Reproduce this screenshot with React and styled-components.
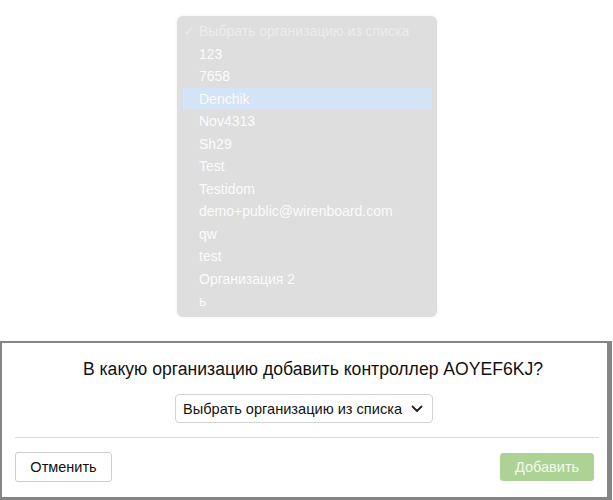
import React from "react";
import styled, { createGlobalStyle } from "styled-components";

const GlobalStyle = createGlobalStyle`
  html, body {
    margin: 0;
    padding: 0;
    background: #ffffff;
  }
  body {
    font-family: "Liberation Sans", Arial, sans-serif;
    width: 613px;
    height: 500px;
    overflow: hidden;
  }
`;

const organizations = [
  "123",
  "7658",
  "Denchik",
  "Nov4313",
  "Sh29",
  "Test",
  "Testidom",
  "demo+public@wirenboard.com",
  "qw",
  "test",
  "Организация 2",
  "ь",
];

const Page = styled.div`
  display: flex;
  flex-direction: column;
  height: 500px;
`;

const MenuArea = styled.div`
  height: 341px;
  display: flex;
  justify-content: center;
  align-items: flex-start;
  padding-top: 16px;
  box-sizing: border-box;
`;

const Menu = styled.ul`
  list-style: none;
  margin: 0 0 0 1px;
  padding: 4px 5px;
  width: 260px;
  box-sizing: border-box;
  background: #dedede;
  border-radius: 6px;
  box-shadow: 0 0 4px rgba(0, 0, 0, 0.06);
`;

const Option = styled.li`
  position: relative;
  height: 22.5px;
  line-height: 22.5px;
  padding-left: 17px;
  border-radius: 3px;
  font-family: "Liberation Sans", Arial, sans-serif;
  font-size: 14px;
  color: ${(p) => (p.$muted ? "#ececec" : "#fbfbfb")};
  background: ${(p) => (p.$active ? "#d5e3f6" : "transparent")};
  white-space: nowrap;
`;

const Check = styled.span`
  position: absolute;
  left: 2px;
  top: 0;
  font-size: 12px;
`;

const Modal = styled.div`
  flex: 1;
  border: 2px solid #858585;
  border-right-width: 5px;
  border-bottom-width: 3px;
  margin-right: 1px;
  background: #ffffff;
  display: flex;
  flex-direction: column;
  padding: 0 8px 0 13px;
`;

const Title = styled.h2`
  margin: 16px 0 0;
  padding-left: 12px;
  text-align: center;
  font-size: 17.6px;
  font-weight: 400;
  color: #111111;
  line-height: 21px;
`;

const SelectRow = styled.div`
  display: flex;
  justify-content: center;
  margin-top: 14px;
  padding-right: 6px;
`;

const SelectButton = styled.button`
  display: flex;
  align-items: center;
  gap: 9px;
  height: 29px;
  padding: 0 9px 0 7px;
  border: 1px solid #d3d3d3;
  border-radius: 4px;
  background: #ffffff;
  font-family: "Liberation Sans", Arial, sans-serif;
  font-size: 14.6px;
  color: #111111;
`;

const Divider = styled.hr`
  margin: 14px 0 0;
  border: none;
  border-top: 1px solid #dcdcdc;
`;

const Footer = styled.div`
  display: flex;
  justify-content: space-between;
  align-items: center;
  margin-top: 14px;
  padding-right: 5px;
`;

const Button = styled.button`
  height: ${(p) => (p.$primary ? "28px" : "30px")};
  padding: 0 14px;
  border-radius: 3px;
  border: 1px solid ${(p) => (p.$primary ? "#acd394" : "#cfcfcf")};
  background: ${(p) => (p.$primary ? "#acd394" : "#ffffff")};
  color: ${(p) => (p.$primary ? "#f4faf0" : "#111111")};
  font-family: "Liberation Sans", Arial, sans-serif;
  font-size: 14.5px;
  width: ${(p) => (p.$primary ? "94px" : "97px")};
`;

const Chevron = () => (
  <svg width="12" height="8" viewBox="0 0 12 8" fill="none">
    <path d="M1.5 1.5 L6 6 L10.5 1.5" stroke="#222" strokeWidth="1.8" strokeLinecap="round" strokeLinejoin="round" />
  </svg>
);

export default function App() {
  return (
    <Page>
      <GlobalStyle />
      <MenuArea>
        <Menu>
          <Option $muted>
            <Check>✓</Check>
            Выбрать организацию из списка
          </Option>
          {organizations.map((name) => (
            <Option key={name} $active={name === "Denchik"}>
              {name}
            </Option>
          ))}
        </Menu>
      </MenuArea>
      <Modal>
        <Title>В какую организацию добавить контроллер AOYEF6KJ?</Title>
        <SelectRow>
          <SelectButton>
            Выбрать организацию из списка
            <Chevron />
          </SelectButton>
        </SelectRow>
        <Divider />
        <Footer>
          <Button>Отменить</Button>
          <Button $primary>Добавить</Button>
        </Footer>
      </Modal>
    </Page>
  );
}
